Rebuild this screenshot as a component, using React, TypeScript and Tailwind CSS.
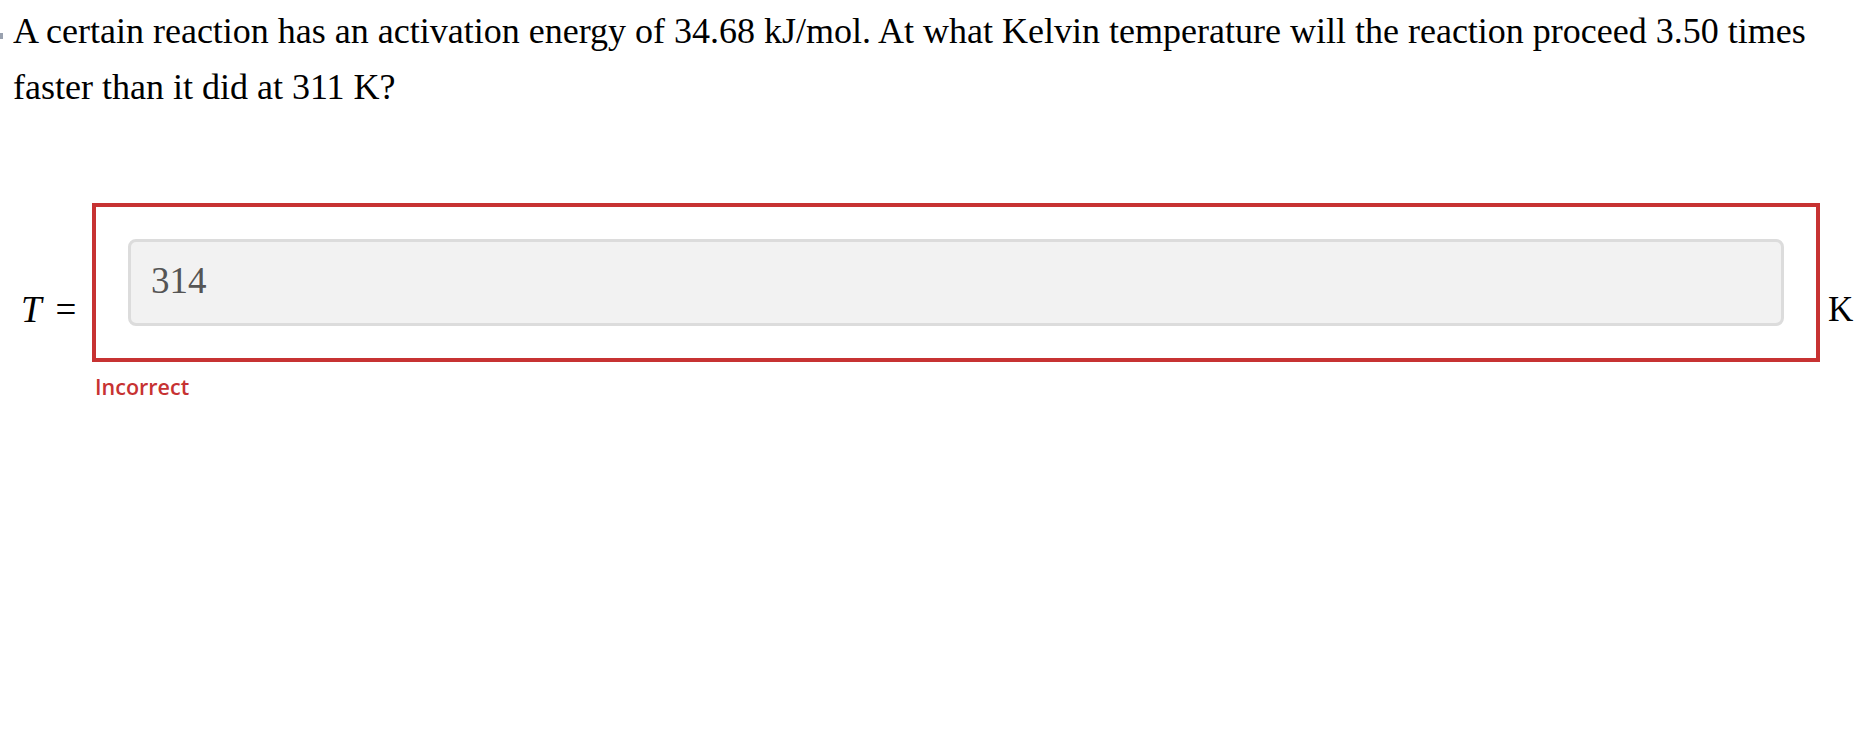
export default function App() {
  const serif = "font-['Liberation_Serif','Times_New_Roman',serif]"

  return (
    <div className="min-h-screen bg-white text-black">
      <div className="relative pt-[3px] pl-[13px]">
        {/* clipped question number at the very edge */}
        <div className="absolute left-0 top-[33px] h-[6px] w-[3px] bg-gray-400" />
        <p className={`${serif} w-[1840px] text-[36px] leading-[56px] text-black`}>
          A certain reaction has an activation energy of 34.68 kJ/mol. At what Kelvin temperature will the reaction proceed 3.50 times faster than it did at 311 K?
        </p>
      </div>

      <div className="mt-[88px] flex items-start">
        <div className={`${serif} w-[92px] shrink-0 pl-[21px] pt-[88px] text-[37px] leading-none`}>
          <span className="italic">T</span>
          <span className="ml-[14px]">=</span>
        </div>

        <div className="w-[1728px] shrink-0">
          <div className="border-4 border-[#c73232] p-[32px]">
            <div className="h-[87px] rounded-lg border-[3px] border-[#dcdcdc] bg-[#f2f2f2] pl-[20px] pt-[20px]">
              <span className={`${serif} text-[37px] leading-none text-[#555555]`}>314</span>
            </div>
          </div>
          <div className="mt-[14px] pl-[3px] font-['Open_Sans',sans-serif] text-[21.5px] font-semibold leading-none text-[#c73232]">
            Incorrect
          </div>
        </div>

        <div className={`${serif} ml-[8px] pt-[89px] text-[35px] leading-none`}>K</div>
      </div>
    </div>
  )
}
